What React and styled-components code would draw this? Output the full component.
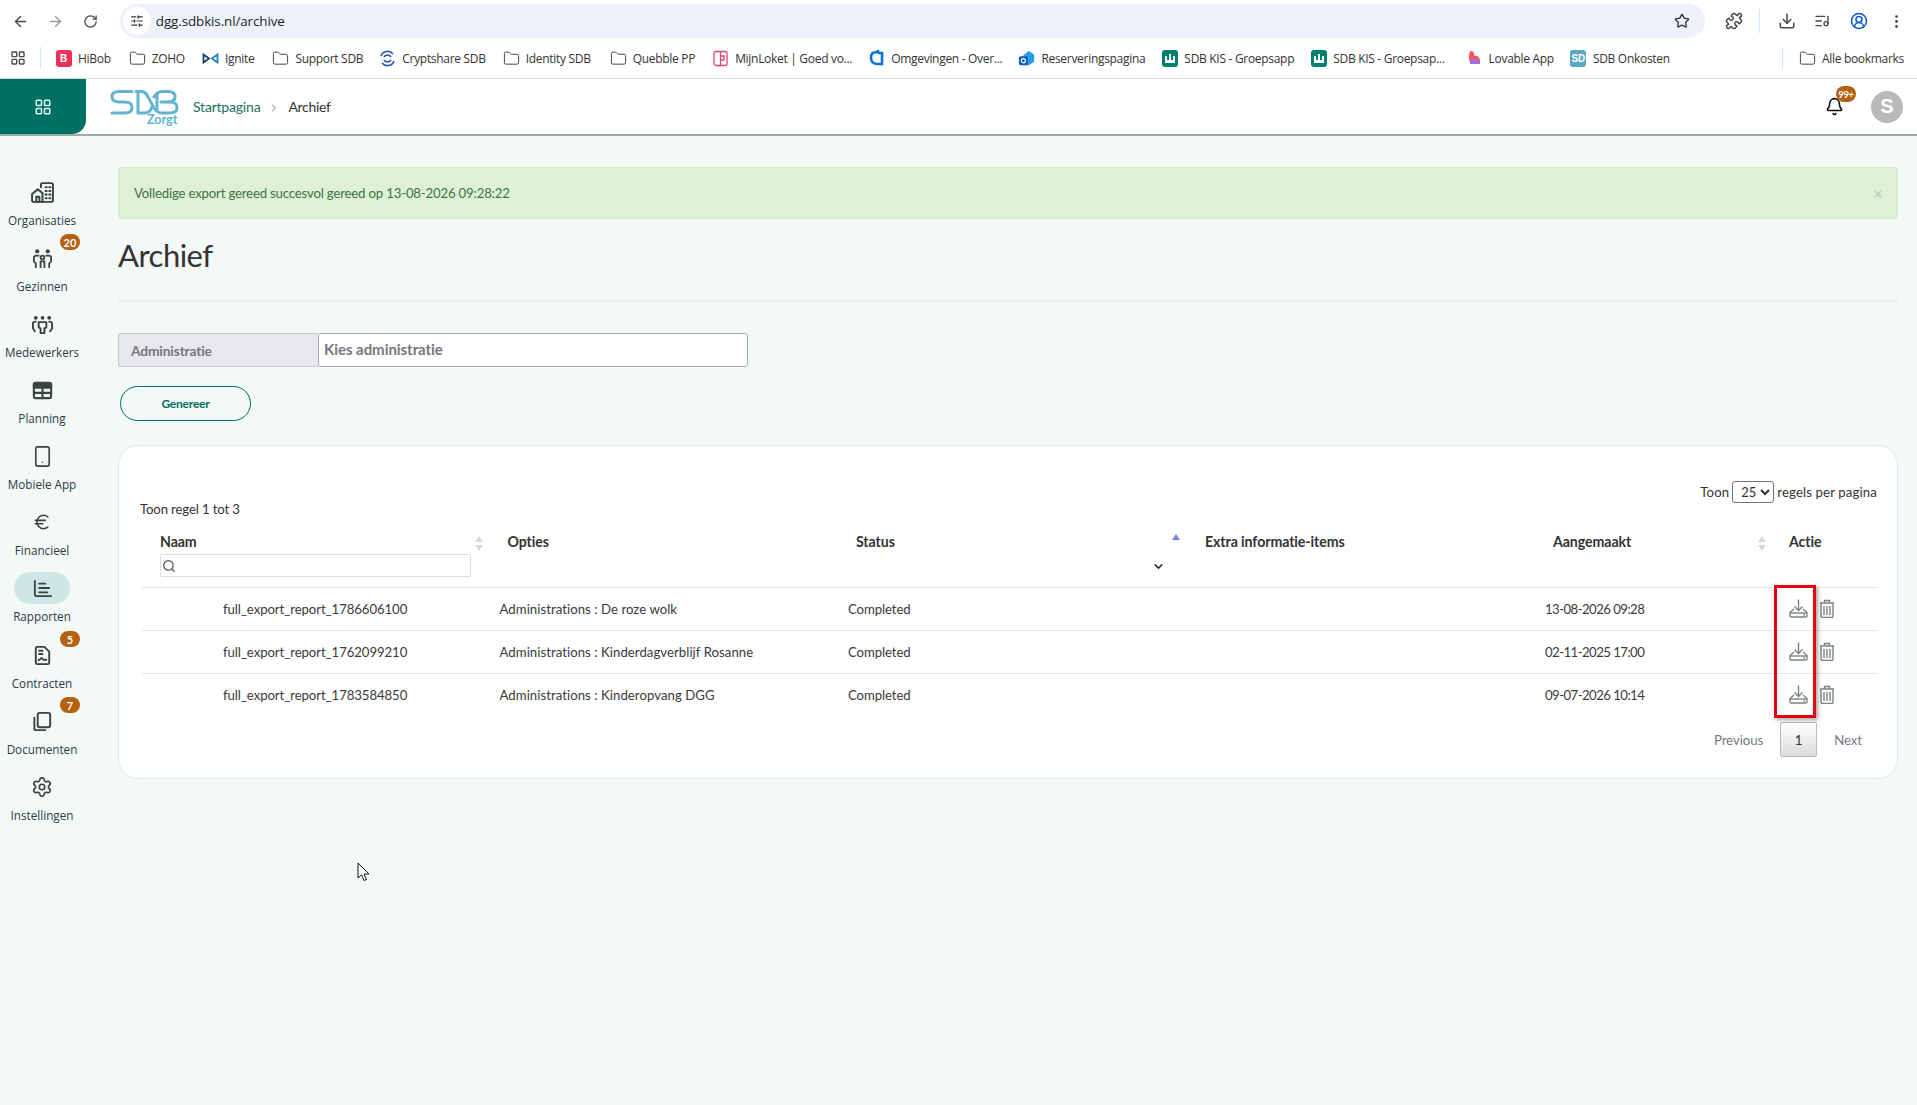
import React from 'react';
import styled, { createGlobalStyle } from 'styled-components';
import {
  ArrowLeft, ArrowRight, RotateCw, Star, Puzzle, Download, CircleUserRound, EllipsisVertical,
  SlidersHorizontal, Folder, LayoutGrid, Bell, Search, ChevronDown, ChevronRight, Smartphone, Euro, Settings, ListMusic
} from 'lucide-react';

const Global = createGlobalStyle`
  html, body { margin: 0; padding: 0; background: #f3f9f7; }
  * { box-sizing: border-box; }
  body { font-family: "Lato", "Liberation Sans", sans-serif; color: #333; }
`;

const Page = styled.div`
  width: 1917px; height: 1105px; overflow: hidden; position: relative; background: #f3f9f7;
`;

const ChromeBar = styled.div`
  height: 42px; background: #fff; display: flex; align-items: center; padding: 0 0 0 3px; color: #474747;
`;
const NavBtn = styled.div`
  width: 35px; display: flex; justify-content: center; align-items: center; color: ${p => p.$off ? '#9a9a9a' : '#474747'};
`;
const UrlBar = styled.div`
  margin-left: 12px; width: 1588px; height: 34px; border-radius: 17px; background: #edf2fa; display: flex; align-items: center; padding: 0 15px 0 3px;
`;
const SiteInfo = styled.div`
  width: 28px; height: 28px; border-radius: 50%; background: #fff; display: flex; align-items: center; justify-content: center; color: #333;
`;
const UrlText = styled.span`
  margin-left: 5px; flex: 1; font: 13.4px "Open Sans", sans-serif; color: #1f1f1f; letter-spacing: -0.1px;
`;
const ChromeTools = styled.div`
  display: flex; align-items: center; margin-left: 17px; gap: 0;
`;
const ToolBtn = styled.div`
  width: ${p => p.$w || 36}px; display: flex; justify-content: center; color: ${p => p.$c || '#474747'};
`;
const Divider = styled.div`
  width: 1px; height: ${p => p.$h || 24}px; background: #d3e3fd; margin: ${p => p.$m || '0 9px'}; flex: none;
`;

const BookmarkBar = styled.div`
  height: 37px; background: #fff; border-bottom: 1px solid #dcdcdc; display: flex; align-items: center; padding: 0 13px 4px 10px; white-space: nowrap;
`;
const Bookmark = styled.div`
  display: flex; align-items: center; gap: 6px; margin-right: ${p => p.$mr ?? 17}px;
  font: 12px "Open Sans", sans-serif; letter-spacing: -0.3px; color: #333;
`;
const BookmarkIcon = styled.span`
  width: 17px; height: 17px; display: flex; align-items: center; justify-content: center; flex: none;
`;
const BookmarkEnd = styled.div`
  margin-left: auto; display: flex; align-items: center;
`;
const Square = styled.span`
  width: 16px; height: 17px; border-radius: 3px; background: ${p => p.$bg}; color: #fff; display: flex; align-items: center; justify-content: center; font: bold 10px "Liberation Sans", sans-serif; letter-spacing: 0;
`;

const Header = styled.header`
  height: 57px; background: #fff; border-bottom: 2px solid #a4a8a7; display: flex; align-items: stretch; position: relative;
`;
const AppsTile = styled.div`
  width: 86px; height: 55px; background: #006f64; border-bottom-right-radius: 14px; display: flex; align-items: center; justify-content: center; color: #dff3ef;
`;
const Logo = styled.div`
  position: relative; width: 70px; height: 44px; margin: 10px 0 0 24px; flex: none;
`;
const LogoWord = styled.span`
  position: absolute; left: 37px; top: 23px; font: 700 12.5px "Lato", sans-serif; color: #5fb3cf;
`;
const Crumbs = styled.nav`
  display: flex; align-items: center; margin-left: 13px; font-size: 14px; letter-spacing: -0.2px;
`;
const CrumbLink = styled.span` color: #1a6f66; `;
const CrumbSep = styled.span` color: #6b8a85; margin: 3px 8px 0 8px; display: flex; `;
const CrumbNow = styled.span` color: #333; letter-spacing: -0.3px; `;
const HeaderRight = styled.div`
  margin-left: auto; display: flex; align-items: center; padding-right: 14px; gap: 27px;
`;
const BellWrap = styled.div`
  position: relative; display: flex;
`;
const BellBadge = styled.span`
  position: absolute; left: 11px; top: -11px; width: 20px; height: 16px; border-radius: 8px; background: #b5610f; color: #fff;
  font-size: 9.5px; font-weight: 700; display: flex; align-items: center; justify-content: center; letter-spacing: -0.3px;
`;
const Avatar = styled.div`
  width: 32px; height: 32px; border-radius: 50%; background: #b9b9b9; color: #fff; font: bold 20px "Liberation Sans", sans-serif; display: flex; align-items: center; justify-content: center;
`;

const Body = styled.div` display: flex; align-items: flex-start; `;
const Sidebar = styled.aside`
  width: 84px; flex: none; padding-top: 40px; display: flex; flex-direction: column; margin-right: 34px;
`;
const NavItem = styled.div`
  position: relative; height: ${p => p.$active ? 67 : 66}px; display: flex; flex-direction: column; align-items: center;
`;
const NavIcon = styled.div`
  width: 56px; height: 32px; border-radius: 16px; background: ${p => p.$active ? '#cfe7e4' : 'transparent'}; display: flex; align-items: center; justify-content: center; color: #3a4442;
`;
const NavLabel = styled.span`
  margin-top: 4px; font: 11.7px/16px "Open Sans", sans-serif; color: #2e3a48; letter-spacing: 0;
`;
const NavBadge = styled.span`
  position: absolute; left: 60px; top: -8px; width: 20px; height: 16px; border-radius: 8px; background: #b5610f; color: #fff;
  font-size: 11px; font-weight: 700; display: flex; align-items: center; justify-content: center;
`;

const Main = styled.main`
  width: 1780px; padding-top: 31px; display: flex; flex-direction: column;
`;
const Alert = styled.div`
  height: 52px; background: #dff0d8; border: 1px solid #d6e9c6; border-radius: 3px; color: #3c763d; display: flex; align-items: center; justify-content: space-between; padding: 0 15px 0 15px;
  font-size: 13.2px; letter-spacing: -0.18px;
`;
const AlertClose = styled.span`
  color: #bcd2b9; font: bold 15px "Liberation Sans", sans-serif;
`;
const Title = styled.h1`
  margin: 14px 0 0; font-size: 31px; line-height: 44px; font-weight: 400; color: #333; letter-spacing: -0.5px;
`;
const Rule = styled.div`
  height: 4px; background: #efefef; margin-top: 22px; border-radius: 2px;
`;
const InputGroup = styled.div`
  display: flex; width: 630px; height: 34px; margin-top: 30px;
`;
const Addon = styled.div`
  width: 200px; background: #e6e8ed; border: 1px solid #c9c9c9; border-right: 0; border-radius: 3px 0 0 3px; padding: 1px 0 0 12px; font-size: 13.8px; font-weight: 700; color: #777; display: flex; align-items: center; letter-spacing: -0.15px;
`;
const SelectBox = styled.div`
  flex: 1; background: #fff; border: 1px solid #aaa; border-radius: 3px; padding: 0 0 2px 5px; font-size: 15px; font-weight: 700; color: #777; display: flex; align-items: center; letter-spacing: -0.05px;
`;
const Generate = styled.button`
  width: 131px; height: 35px; margin: 19px 0 0 2px; background: transparent; border: 1px solid #006f64; border-radius: 18px; color: #006f64; font: 700 12px "Lato", sans-serif; letter-spacing: -0.2px; padding: 0;
`;
const Card = styled.section`
  margin-top: 24px; height: 334px; background: #fff; border: 1px solid #e1e8e6; border-radius: 20px; padding: 35px 20px 0 23px; display: flex; flex-direction: column;
`;
const CardTop = styled.div`
  height: 50px; display: grid; grid-template-columns: 1fr auto;
`;
const Info = styled.div`
  align-self: end; font-size: 13.2px; line-height: 18px; letter-spacing: -0.15px; color: #333; margin: 0 0 13px -2px;
`;
const PerPage = styled.div`
  align-self: start; display: flex; align-items: center; height: 22px; gap: 3px; font-size: 13.2px; color: #333; letter-spacing: 0.13px;
`;
const PerSelect = styled.select`
  width: 42px; height: 22px; border: 1px solid #767676; border-radius: 3px; background: #fff; font: 13px "Lato", sans-serif; color: #333; padding: 0 0 0 4px;
`;
const TableWrap = styled.div` position: relative; `;
const Table = styled.table`
  width: 1735px; border-collapse: collapse; table-layout: fixed; font-size: 13.2px;
`;
const Th = styled.th`
  height: 56px; vertical-align: top; text-align: left; padding: 3px 0 0 ${p => p.$pl ?? 18}px; font-size: 14.2px; font-weight: 700; color: #333; position: relative; letter-spacing: -0.1px; line-height: 16px;
`;
const SortArrows = styled.span`
  position: absolute; right: ${p => p.$r}px; top: 5px; display: flex; flex-direction: column; gap: 3px;
`;
const Arrow = styled.span`
  width: 0; height: 0; border-left: 4px solid transparent; border-right: 4px solid transparent;
  ${p => p.$up ? `border-bottom: 6px solid ${p.$c || '#d9d9d9'};` : `border-top: 6px solid ${p.$c || '#d9d9d9'};`}
`;
const SearchField = styled.div`
  width: 311px; height: 23px; margin-top: 4px; border: 1px solid #ddd; border-radius: 2px; background: #fff; display: flex; align-items: center; padding-left: 1px; color: #666;
`;
const StatusChevron = styled.span`
  position: absolute; left: 314px; top: 29px; display: flex; color: #333;
`;
const SortUp = styled.span`
  position: absolute; left: 334px; top: 3px; display: flex;
`;
const Td = styled.td`
  height: 43px; border-top: 1px solid #e4e6e6; padding: 0 0 0 ${p => p.$pl ?? 10}px; color: #3a3a3a; letter-spacing: ${p => p.$ls ?? -0.1}px; white-space: nowrap;
`;
const Actions = styled.div`
  display: flex; align-items: center; gap: 11px; padding-left: 8px; color: #7b8583;
`;
const RedBox = styled.div`
  position: absolute; left: 1632px; top: 54px; width: 42px; height: 133px; border: 3px solid #e60012; box-shadow: 2px 2px 4px rgba(0,0,0,.35); pointer-events: none;
`;
const Pager = styled.div`
  display: flex; justify-content: flex-end; align-items: center; margin-top: 6px; font-size: 13.2px; padding-right: 15px; color: #6f7b85;
`;
const PageBtn = styled.span`
  color: #6f7b85; letter-spacing: -0.05px; margin: ${p => p.$m};
`;
const PageNow = styled.span`
  width: 37px; height: 35px; border: 1px solid #b9b9b9; border-radius: 2px; background: linear-gradient(#fff, #dcdcdc); color: #333; display: flex; align-items: center; justify-content: center;
`;
const Cursor = styled.svg`
  position: absolute; left: 357px; top: 862px;
`;

const BobIcon = () => <Square $bg="#e8345c">B</Square>;
const IgniteIcon = () => (
  <svg width="17" height="17" viewBox="0 0 17 17" fill="none" stroke="#15406e" strokeWidth="1.8"><path d="M1.5 4.5 L7 8.5 L1.5 12.5 Z" /><path d="M15.5 4.5 L10 8.5 L15.5 12.5 Z" stroke="#2b7fc4" /></svg>
);
const CryptIcon = () => (
  <svg width="17" height="17" viewBox="0 0 17 17" fill="none" stroke="#2a55a8" strokeWidth="1.6"><path d="M14 4 A7 7 0 0 0 2 6" /><path d="M3 13 A7 7 0 0 0 15 11" /><path d="M12 7 A4 4 0 0 0 5 7" /><path d="M5 10 A4 4 0 0 0 12 10" /></svg>
);
const LoketIcon = () => (
  <svg width="17" height="17" viewBox="0 0 17 17" fill="none" stroke="#e0427a" strokeWidth="1.3"><rect x="2" y="1.5" width="13" height="14" rx="2" /><path d="M8.5 1.5 V10 H12 V6 H8.5 M8.5 10 V15.5" /></svg>
);
const AzureIcon = () => (
  <svg width="17" height="18" viewBox="0 0 17 18" fill="none" stroke="#0a72d0" strokeWidth="2.6"><path d="M10 1 V3 C4 3 3 5 3 9 C3 13 5 15 10 15 H14 V4 H10" /></svg>
);
const OutlookIcon = () => (
  <svg width="19" height="19" viewBox="0 0 19 19"><path d="M6 6 L12 1 L18 5 V13 L12 17 H6 Z" fill="#2b9ae8" /><rect x="1" y="7" width="10" height="10" rx="2" fill="#0a5cb8" /><circle cx="6" cy="12" r="2.3" fill="none" stroke="#fff" strokeWidth="1.3" /></svg>
);
const KisIcon = () => (
  <Square $bg="#00806f"><svg width="12" height="12" viewBox="0 0 12 12" fill="#fff"><rect x="1" y="4" width="2" height="7" /><rect x="5" y="2" width="2" height="9" /><rect x="9" y="4" width="2" height="7" /><rect x="1" y="8" width="10" height="3" /></svg></Square>
);
const LovableIcon = () => (
  <svg width="15" height="16" viewBox="0 0 15 16"><path d="M4 1 C7 1 7 4 7.5 6 C10 5 13 7 13 11 V14 H3 V12 C1 9 2 1 4 1 Z" fill="#f2555a" /><path d="M3 14 V10 C6 8 11 9 13 11 V14 Z" fill="#a86ce0" /></svg>
);
const OnkostIcon = () => (
  <Square $bg="#5ba8c4">SD</Square>
);

const F = <Folder size={17} strokeWidth={1.4} color="#444" />;
const bookmarks = [
  [<BobIcon />, 'HiBob', 18], [F, 'ZOHO', 17], [<IgniteIcon />, 'Ignite', 18], [F, 'Support SDB', 16],
  [<CryptIcon />, 'Cryptshare SDB', 17], [F, 'Identity SDB', 19], [F, 'Quebble PP', 17], [<LoketIcon />, 'MijnLoket | Goed vo...', 16],
  [<AzureIcon />, 'Omgevingen - Over...', 16], [<OutlookIcon />, 'Reserveringspagina', 16], [<KisIcon />, 'SDB KIS - Groepsapp', 16],
  [<KisIcon />, 'SDB KIS - Groepsap...', 21], [<LovableIcon />, 'Lovable App', 16], [<OnkostIcon />, 'SDB Onkosten', 0],
];

const I = { width: 23, height: 23, viewBox: '0 0 24 24', fill: 'none', stroke: 'currentColor', strokeLinecap: 'round', strokeLinejoin: 'round' };
const OrgIcon = () => (
  <svg {...I} width="25" height="25" strokeWidth="1.9"><path d="M12 21 H3.5 Q2 21 2 19.5 V13.5 L7.5 9 L12 12.5" /><path d="M10.5 7 V4.5 Q10.5 3 12 3 H20.5 Q22 3 22 4.5 V19.5 Q22 21 20.5 21 H12 V13" /><path d="M6 21 V16 H9 V21" /><path d="M15 7 h1 M18.5 7 h1 M15 10.5 h1 M18.5 10.5 h1 M15 14 h1 M18.5 14 h1 M15 17.5 h1 M18.5 17.5 h1" strokeWidth="2" /></svg>
);
const FamilyIcon = () => (
  <svg {...I} strokeWidth="1.9"><circle cx="6.5" cy="4.5" r="2.2" fill="currentColor" stroke="none" /><circle cx="17.5" cy="4.5" r="2.2" fill="currentColor" stroke="none" /><circle cx="12" cy="11" r="2" /><path d="M5 21 V17 L3 15 V11 Q3 9 6 9 H8 M19 21 V17 L21 15 V11 Q21 9 18 9 H16" /><path d="M10 21 V15 H14 V21" /></svg>
);
const TeamIcon = () => (
  <svg {...I} strokeWidth="2"><circle cx="5" cy="5" r="2" fill="currentColor" stroke="none" /><circle cx="12" cy="5" r="2" fill="currentColor" stroke="none" /><circle cx="19" cy="5" r="2" fill="currentColor" stroke="none" /><path d="M4 19 L2 16 V11 Q2 9 5 9 M20 19 L22 16 V11 Q22 9 19 9" /><path d="M8 9.5 H16 V15 L14 16 V21 H10 V16 L8 15 Z" /></svg>
);
const PlanIcon = () => (
  <svg {...I} strokeWidth="2.2"><rect x="3" y="4" width="18" height="16" rx="2" /><path d="M3 5 H21 V9 H3 Z" fill="currentColor" /><path d="M3 14.5 H21 M12 9 V20" /></svg>
);
const ReportIcon = () => (
  <svg {...I} strokeWidth="1.9"><path d="M4 4 V18 Q4 20 6 20 H21" /><path d="M8.5 7 H15 M8.5 11.5 H19 M8.5 16 H17" /></svg>
);
const ContractIcon = () => (
  <svg {...I} strokeWidth="2"><path d="M6.5 3 H14 L19 8 V19.5 Q19 21 17.5 21 H6.5 Q5 21 5 19.5 V4.5 Q5 3 6.5 3 Z" /><path d="M8.5 7 H12 M8.5 10.5 H12" /><path d="M8 17 L11 14.5 L13 16.5 H16" /></svg>
);
const DocsIcon = () => (
  <svg {...I} strokeWidth="2"><path d="M9 3 H18 Q20 3 20 5 V16 Q20 18 18 18 H9 Q7 18 7 16 V5 Q7 3 9 3 Z" /><path d="M3.5 8 V19 Q3.5 21 5.5 21 H15" /></svg>
);
const navs = [
  ['Organisaties', <OrgIcon />], ['Gezinnen', <FamilyIcon />, '20'], ['Medewerkers', <TeamIcon />],
  ['Planning', <PlanIcon />], ['Mobiele App', <Smartphone size={23} strokeWidth={1.7} />],
  ['Financieel', <Euro size={20} strokeWidth={1.9} />], ['Rapporten', <ReportIcon />, null, true],
  ['Contracten', <ContractIcon />, '5'], ['Documenten', <DocsIcon />, '7'], ['Instellingen', <Settings size={22} strokeWidth={1.8} />],
];

const DownloadIcon = () => (
  <svg width="19" height="19" viewBox="0 0 19 19" fill="none" stroke="currentColor" strokeWidth="1.4">
    <path d="M9.5 0.5 V11.5 M5.5 7.5 L9.5 11.5 L13.5 7.5" />
    <path d="M5 10 L1 13.5 V17 Q1 18 2 18 H17 Q18 18 18 17 V13.5 L14 10" strokeLinejoin="round" />
    <path d="M1 14 H18" />
    <path d="M14.5 16 h1.5" />
  </svg>
);
const TrashIcon = () => (
  <svg width="16" height="19" viewBox="0 0 16 19" fill="none" stroke="currentColor" strokeWidth="1.4"><path d="M1 4 H15 M5.5 4 V1.5 H10.5 V4" /><path d="M2 4 V17 Q2 18.5 3.5 18.5 H12.5 Q14 18.5 14 17 V4" /><path d="M5 7 V16 M8 7 V16 M11 7 V16" /></svg>
);

const rows = [
  ['full_export_report_1786606100', 'Administrations : De roze wolk', '13-08-2026 09:28'],
  ['full_export_report_1762099210', 'Administrations : Kinderdagverblijf Rosanne', '02-11-2025 17:00'],
  ['full_export_report_1783584850', 'Administrations : Kinderopvang DGG', '09-07-2026 10:14'],
];

const Sort = ({ r }) => (<SortArrows $r={r}><Arrow $up /><Arrow /></SortArrows>);

export default function App() {
  return (
    <Page>
      <Global />
      <ChromeBar>
        <NavBtn><ArrowLeft size={17} /></NavBtn>
        <NavBtn $off><ArrowRight size={17} /></NavBtn>
        <NavBtn><RotateCw size={15} /></NavBtn>
        <UrlBar>
          <SiteInfo><SlidersHorizontal size={14} /></SiteInfo>
          <UrlText>dgg.sdbkis.nl/archive</UrlText>
          <Star size={16} color="#333" />
        </UrlBar>
        <ChromeTools>
          <ToolBtn $w={24}><Puzzle size={18} /></ToolBtn>
          <Divider $m="0 13px 0 13px" />
          <ToolBtn $w={28}><Download size={18} /></ToolBtn>
          <ToolBtn $w={42}><ListMusic size={16} /></ToolBtn>
          <ToolBtn $w={32} $c="#0b57d0"><CircleUserRound size={18} /></ToolBtn>
          <ToolBtn $w={42}><EllipsisVertical size={17} /></ToolBtn>
        </ChromeTools>
      </ChromeBar>
      <BookmarkBar>
        <LayoutGrid size={16} color="#474747" strokeWidth={2} />
        <Divider $h={22} $m="0 14px 0 14px" />
        {bookmarks.map(([icon, label, mr]) => (
          <Bookmark key={label + mr} $mr={mr}><BookmarkIcon>{icon}</BookmarkIcon>{label}</Bookmark>
        ))}
        <BookmarkEnd>
          <Divider $h={22} $m="0 16px 0 0" />
          <Bookmark $mr={0}><BookmarkIcon>{F}</BookmarkIcon>Alle bookmarks</Bookmark>
        </BookmarkEnd>
      </BookmarkBar>
      <Header>
        <AppsTile><LayoutGrid size={18} strokeWidth={2} /></AppsTile>
        <Logo>
          <svg width="70" height="26" viewBox="0 0 70 26" fill="none" stroke="#62b4cf" strokeWidth="3" strokeLinecap="round">
            <path d="M22 2.5 H9 Q2 2.5 2 7.5 Q2 13 9 13 H15 Q22 13 22 18.5 Q22 24 15 24 H2" />
            <path d="M26 2.5 H31 Q35 2.5 37 6 L44 19 Q47 24 52 24 H60 Q67 24 67 18.5 Q67 13 60 13 H51" />
            <path d="M28 2.5 V24 H34 Q40 24 42 18 M44 8 Q47 2.5 52 2.5 H58 Q65 2.5 65 7.5 Q65 13 58 13" />
            <path d="M47 5 V21" />
          </svg>
          <LogoWord>Zorgt</LogoWord>
        </Logo>
        <Crumbs>
          <CrumbLink>Startpagina</CrumbLink>
          <CrumbSep><ChevronRight size={12} /></CrumbSep>
          <CrumbNow>Archief</CrumbNow>
        </Crumbs>
        <HeaderRight>
          <BellWrap>
            <Bell size={19} color="#111" strokeWidth={2} />
            <BellBadge>99+</BellBadge>
          </BellWrap>
          <Avatar>S</Avatar>
        </HeaderRight>
      </Header>
      <Body>
        <Sidebar>
          {navs.map(([label, icon, badge, active]) => (
            <NavItem key={label} $active={active}>
              {badge && <NavBadge>{badge}</NavBadge>}
              <NavIcon $active={active}>{icon}</NavIcon>
              <NavLabel>{label}</NavLabel>
            </NavItem>
          ))}
        </Sidebar>
        <Main>
          <Alert>
            <span>Volledige export gereed succesvol gereed op 13-08-2026 09:28:22</span>
            <AlertClose>×</AlertClose>
          </Alert>
          <Title>Archief</Title>
          <Rule />
          <InputGroup>
            <Addon>Administratie</Addon>
            <SelectBox>Kies administratie</SelectBox>
          </InputGroup>
          <div><Generate>Genereer</Generate></div>
          <Card>
            <CardTop>
              <Info>Toon regel 1 tot 3</Info>
              <PerPage>
                Toon
                <PerSelect defaultValue="25"><option>25</option></PerSelect>
                regels per pagina
              </PerPage>
            </CardTop>
            <TableWrap>
              <Table>
                <colgroup>
                  <col style={{ width: 347.5 }} /><col style={{ width: 348.5 }} /><col style={{ width: 349 }} />
                  <col style={{ width: 348 }} /><col style={{ width: 236 }} /><col style={{ width: 106 }} />
                </colgroup>
                <thead>
                  <tr>
                    <Th>Naam<Sort r={7} />
                      <SearchField><Search size={14} strokeWidth={2.4} /></SearchField>
                    </Th>
                    <Th>Opties</Th>
                    <Th>Status
                      <SortUp><Arrow $up $c="#7c84dd" /></SortUp>
                      <StatusChevron><ChevronDown size={13} strokeWidth={3} /></StatusChevron>
                    </Th>
                    <Th>Extra informatie-items</Th>
                    <Th>Aangemaakt<Sort r={5} /></Th>
                    <Th>Actie</Th>
                  </tr>
                </thead>
                <tbody>
                  {rows.map(([name, opt, date]) => (
                    <tr key={name}>
                      <Td $pl={81} $ls={-0.08}>{name}</Td>
                      <Td $ls={0.04}>{opt}</Td>
                      <Td>Completed</Td>
                      <Td />
                      <Td $ls={-0.56}>{date}</Td>
                      <Td><Actions><DownloadIcon /><TrashIcon /></Actions></Td>
                    </tr>
                  ))}
                </tbody>
              </Table>
              <RedBox />
            </TableWrap>
            <Pager>
              <PageBtn $m="0 17px 0 0">Previous</PageBtn>
              <PageNow>1</PageNow>
              <PageBtn $m="0 0 0 17px">Next</PageBtn>
            </Pager>
          </Card>
        </Main>
      </Body>
      <Cursor width="14" height="20" viewBox="0 0 14 20"><path d="M1 1 V16 L4.5 12.8 L7 18.5 L9.5 17.5 L7 12 H12 Z" fill="#fff" stroke="#111" strokeWidth="1" /></Cursor>
    </Page>
  );
}
